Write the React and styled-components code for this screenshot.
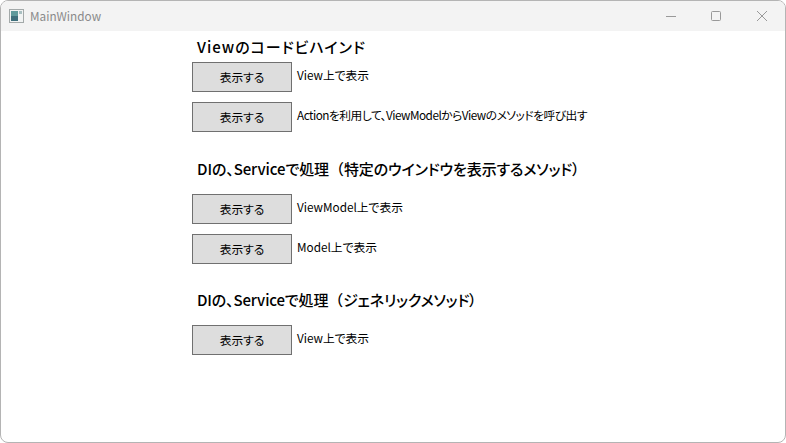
import styled, { createGlobalStyle } from 'styled-components';

const GlobalStyle = createGlobalStyle`
  html, body {
    margin: 0;
    padding: 0;
    background: #fff;
  }
  body {
    font-family: "Noto Sans CJK JP", "Noto Sans", sans-serif;
    font-feature-settings: "palt";
  }
`;

const sections = [
  {
    title: 'Viewのコードビハインド',
    spacing: 1,
    top: 0,
    rows: [
      { text: 'View上で表示' },
      { text: 'Actionを利用して、ViewModelからViewのメソッドを呼び出す', tight: true },
    ],
  },
  {
    title: 'DIの、Serviceで処理',
    detail: '特定のウインドウを表示するメソッド）',
    spacing: -0.1,
    top: 26,
    rows: [{ text: 'ViewModel上で表示' }, { text: 'Model上で表示' }],
  },
  {
    title: 'DIの、Serviceで処理',
    detail: 'ジェネリックメソッド）',
    spacing: -0.15,
    top: 25,
    rows: [{ text: 'View上で表示' }],
  },
];

const App = () => {
  return (
    <Page>
      <GlobalStyle />
      <Window>
        <TitleBar>
          <AppIcon viewBox="0 0 15 14">
            <rect x="0.5" y="0.5" width="14" height="13" fill="#f1f3f3" stroke="#a3a9a9" />
            <rect x="2" y="2" width="7" height="5" fill="#5f9a9c" />
            <rect x="2" y="7" width="7" height="5" fill="#3f6f7c" />
            <rect x="10" y="2" width="3" height="3" fill="#a9bfc1" />
          </AppIcon>
          <WindowTitle>MainWindow</WindowTitle>
          <Controls>
            <ControlButton>
              <ControlIcon viewBox="0 0 10 10">
                <path d="M0 5.5H10" />
              </ControlIcon>
            </ControlButton>
            <ControlButton>
              <ControlIcon viewBox="0 0 10 10">
                <rect x="0.5" y="0.5" width="9" height="9" rx="1" />
              </ControlIcon>
            </ControlButton>
            <ControlButton $wide>
              <ControlIcon viewBox="0 0 10 10">
                <path d="M0 0L10 10M10 0L0 10" />
              </ControlIcon>
            </ControlButton>
          </Controls>
        </TitleBar>
        <Content>
          {sections.map(section => (
            <Section key={section.detail || section.title} $top={section.top}>
              <Heading $spacing={section.spacing} $spaced={section.top > 0}>
                {section.title}
                {section.detail && <OpenParen>（</OpenParen>}
                {section.detail}
              </Heading>
              <Rows>
                {section.rows.map(row => (
                  <Row key={row.text}>
                    <ShowButton>表示する</ShowButton>
                    <Label $tight={row.tight}>{row.text}</Label>
                  </Row>
                ))}
              </Rows>
            </Section>
          ))}
        </Content>
      </Window>
    </Page>
  );
};

const Page = styled.div`
  width: 786px;
  height: 443px;
  overflow: hidden;
  background: #fff;
`;

const Window = styled.div`
  box-sizing: border-box;
  width: 786px;
  height: 443px;
  border: 1px solid #b4b4b4;
  border-radius: 8px;
  overflow: hidden;
  background: #fff;
`;

const TitleBar = styled.div`
  display: flex;
  align-items: center;
  height: 30px;
  padding-left: 8px;
  background: #f3f3f3;
`;

const AppIcon = styled.svg`
  width: 15px;
  height: 14px;
  margin-right: 6px;
`;

const WindowTitle = styled.span`
  padding-bottom: 2px;
  font-size: 11.75px;
  color: #8a8a8a;
`;

const Controls = styled.div`
  display: flex;
  margin-left: auto;
`;

const ControlButton = styled.div`
  display: flex;
  align-items: center;
  box-sizing: border-box;
  width: ${props => (props.$wide ? '46px' : '45px')};
  height: 30px;
  padding-left: ${props => (props.$wide ? '18px' : '17px')};
`;

const ControlIcon = styled.svg`
  width: 10px;
  height: 10px;
  fill: none;
  stroke: #999999;
  stroke-width: 1;
`;

const Content = styled.div`
  display: flex;
  flex-direction: column;
  padding: 5px 0 0 191px;
`;

const Section = styled.section`
  display: flex;
  flex-direction: column;
  margin-top: ${props => props.$top}px;
`;

const Heading = styled.h2`
  margin: 0 0 ${props => (props.$spaced ? '14px' : '4px')} 5px;
  height: 22px;
  font-size: 15px;
  line-height: 22px;
  font-weight: 500;
  letter-spacing: ${props => props.$spacing}px;
  color: #000;
  white-space: nowrap;
`;

const OpenParen = styled.span`
  font-feature-settings: normal;
`;

const Rows = styled.div`
  display: flex;
  flex-direction: column;
  gap: 10px;
`;

const Row = styled.div`
  display: flex;
  align-items: flex-start;
  height: 30px;
`;

const ShowButton = styled.button`
  box-sizing: border-box;
  width: 100px;
  height: 30px;
  padding: 0 0 2px;
  border: 1px solid #707070;
  background: #dddddd;
  font-family: inherit;
  font-feature-settings: inherit;
  font-size: 11.75px;
  color: #000;
`;

const Label = styled.span`
  margin: 4px 0 0 5px;
  font-size: 11.75px;
  line-height: 18px;
  letter-spacing: ${props => (props.$tight ? '-0.5px' : '0')};
  color: #000;
  white-space: nowrap;
`;

export default App;
